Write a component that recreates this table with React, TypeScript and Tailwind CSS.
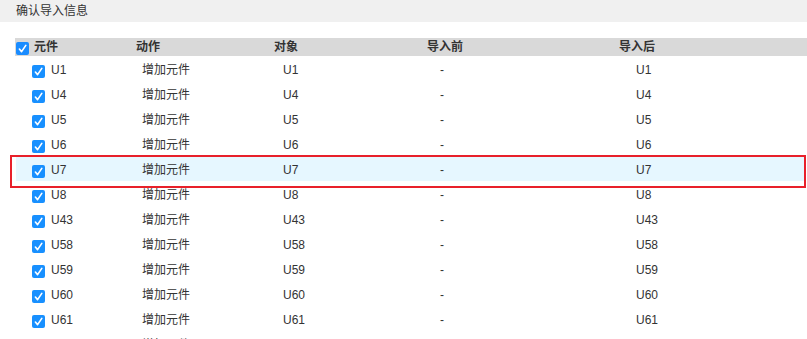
const rows = ['U1', 'U4', 'U5', 'U6', 'U7', 'U8', 'U43', 'U58', 'U59', 'U60', 'U61', 'U62']

function Check({ big = false }: { big?: boolean }) {
  return (
    <span
      className={`flex h-[13px] w-[13px] shrink-0 items-center justify-center rounded-[2px] ${big ? 'bg-[#1a8cff]' : 'bg-[#1890ff]'}`}
    >
      <svg viewBox="0 0 12 12" className="h-[11px] w-[11px]">
        <path d="M2.6 6.6 L5 9.4 L9.6 2.6" fill="none" stroke="#fff" strokeWidth="1.8" strokeLinecap="round" strokeLinejoin="round" />
      </svg>
    </span>
  )
}

export default function App() {
  return (
    <div
      className="relative h-[339px] w-[807px] overflow-hidden bg-white text-[12px] text-[#333]"
      style={{ fontFamily: '"Liberation Sans", "Noto Sans CJK SC", sans-serif' }}
    >
      <div className="flex h-[22px] items-center bg-[#f0f0f0] pl-[16px] leading-none">确认导入信息</div>

      <div className="mt-[16px] ml-[15px] flex h-[18px] items-center bg-[#d9d9d9] font-bold leading-none">
        <div className="flex w-[121px] items-center pl-[1px]">
          <span className="translate-y-[1px]">
            <Check big />
          </span>
          <span className="ml-[5px]">元件</span>
        </div>
        <div className="w-[138px]">动作</div>
        <div className="w-[153px]">对象</div>
        <div className="w-[192px]">导入前</div>
        <div>导入后</div>
      </div>

      <div>
        {rows.map((r) => (
          <div
            key={r}
            className={`flex h-[25px] items-center leading-none ${r === 'U7' ? 'ml-[16px] mr-[2px] bg-[#e6f7ff] pl-[16px]' : 'pl-[32px]'}`}
          >
            <div className="flex w-[110px] items-center">
              <span className="translate-y-[3px]">
                <Check />
              </span>
              <span className="ml-[6px] translate-y-[1px]">{r}</span>
            </div>
            <div className="w-[141px] translate-y-[1px]">增加元件</div>
            <div className="w-[157px] translate-y-[1px]">{r}</div>
            <div className="w-[196px] translate-y-[1px]">-</div>
            <div className="translate-y-[1px]">{r}</div>
          </div>
        ))}
      </div>

      {/* selection outline */}
      <div className="pointer-events-none absolute left-[10px] top-[155px] h-[33px] w-[796px] border-2 border-[#e8202a]" />
    </div>
  )
}
